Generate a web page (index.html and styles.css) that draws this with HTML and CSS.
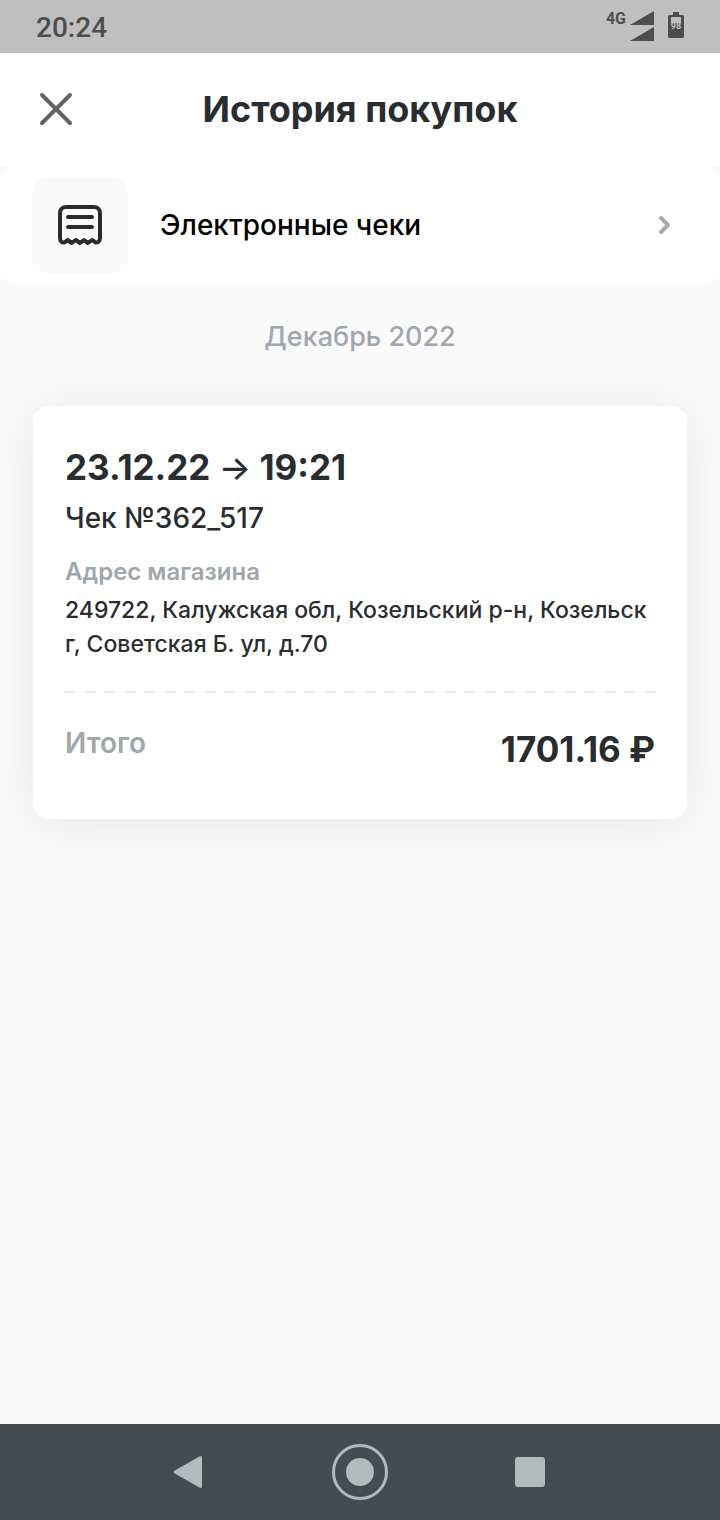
FILE: index.html
```html
<!DOCTYPE html>
<html lang="ru">
<head>
    <meta charset="UTF-8">
    <meta name="viewport" content="width=device-width, initial-scale=1.0">
    <title>История покупок</title>
    <link rel="stylesheet" href="styles.css">
</head>
<body>
    <div class="status-bar">
        <span class="status-time">20:24</span>
        <div class="status-icons">
            <span class="network">4G</span>
            <svg class="signal" viewBox="0 0 24 32" aria-hidden="true">
                <path d="M24 0v14H0z"/>
                <path d="M24 16v14H0z"/>
            </svg>
            <svg class="battery" viewBox="0 0 16 28" aria-hidden="true">
                <path d="M5 1h6v3h3.500a1.500 1.500 0 0 1 1.500 1.500v20a1.500 1.500 0 0 1-1.500 1.500h-13A1.500 1.500 0 0 1 0 25.500v-20A1.500 1.500 0 0 1 1.500 4H5z"/>
                <path class="battery-empty" d="M3 6h10v6H3z"/>
                <text class="battery-level" x="8" y="18">98</text>
            </svg>
        </div>
    </div>

    <header class="header">
        <button type="button" class="btn-close" aria-label="Закрыть">
            <svg viewBox="0 0 48 48">
                <path d="M10 10l28 28M38 10L10 38"/>
            </svg>
        </button>
        <h1>История покупок</h1>
    </header>

    <main class="content">
        <div class="receipts-wrap">
            <a href="#" class="receipts-link">
                <span class="receipts-icon">
                    <svg viewBox="0 0 48 48">
                        <path d="M4 37V12a6 6 0 0 1 6-6h28a6 6 0 0 1 6 6v25c0 3.500-2.500 5-4.500 4.500l-3-2.500-5 3-3.500-3-4 3-4.300-3-4 3-4.200-3-3 2.500C6 42 4 40.500 4 37z"/>
                        <path d="M12 16h24M12 26h24"/>
                    </svg>
                </span>
                <span class="receipts-title">Электронные чеки</span>
                <svg class="chevron" viewBox="0 0 24 24">
                    <path d="M9 5l7 7-7 7"/>
                </svg>
            </a>
        </div>

        <h2 class="month">Декабрь 2022</h2>

        <article class="card">
            <h3 class="card-date">23.12.22 <span class="arrow">→</span> 19:21</h3>
            <p class="card-number">Чек №362_517</p>
            <p class="card-label">Адрес магазина</p>
            <p class="card-address">249722, Калужская обл, Козельский р-н, Козельск г, Советская Б. ул, д.70</p>
            <div class="divider"></div>
            <div class="total">
                <span class="total-label">Итого</span>
                <span class="total-sum">1701.16 ₽</span>
            </div>
        </article>
    </main>

    <nav class="nav-bar">
        <button type="button" class="nav-btn" aria-label="Назад">
            <svg viewBox="0 0 56 56">
                <path d="M12.800 29.500a1.700 1.700 0 0 1 0-3L37.500 12.500Q40 11 40 14v28q0 3-2.500 1.500z"/>
            </svg>
        </button>
        <button type="button" class="nav-btn" aria-label="Домой">
            <svg viewBox="0 0 56 56">
                <circle class="ring" cx="28" cy="28" r="26.500"/>
                <circle cx="28" cy="28" r="14"/>
            </svg>
        </button>
        <button type="button" class="nav-btn" aria-label="Недавние">
            <svg viewBox="0 0 56 56">
                <rect x="13" y="13" width="30" height="30" rx="3"/>
            </svg>
        </button>
    </nav>
</body>
</html>
```

FILE: styles.css
```css
* {
    box-sizing: border-box;
}

body {
    display: flex;
    flex-direction: column;
    min-height: 100vh;
    margin: 0;
    background-color: #fafafa;
    color: #292d30;
    font-family: Inter, "Noto Sans", sans-serif;
}

h1, h2, h3, p {
    margin: 0;
}

button {
    padding: 0;
    border: none;
    background: none;
    cursor: pointer;
}

svg {
    display: block;
}

.status-bar {
    display: flex;
    justify-content: space-between;
    align-items: center;
    height: 53px;
    padding: 1px 36px 0;
    background-color: #bfbfbf;
    color: #4d4d4d;
    font-family: Roboto, sans-serif;
    font-weight: 500;
}

.status-time {
    font-size: 28px;
}

.status-icons {
    display: flex;
    align-items: flex-start;
}

.network {
    margin-right: 4px;
    font-size: 16px;
    line-height: 16px;
    font-weight: 700;
}

.signal {
    width: 24px;
    height: 32px;
    margin-right: 14px;
    fill: #4d4d4d;
}

.battery {
    width: 16px;
    height: 28px;
    fill: #4d4d4d;
}

.battery .battery-empty {
    fill: #bfbfbf;
}

.battery .battery-level {
    fill: #bfbfbf;
    font-size: 9px;
    font-weight: bold;
    text-anchor: middle;
}

.header {
    display: grid;
    grid-template-columns: 48px 1fr 48px;
    align-items: center;
    height: 114px;
    padding: 0 32px 2px;
    background-color: #fff;
}

.btn-close svg {
    width: 48px;
    height: 48px;
    fill: none;
    stroke: #5f6366;
    stroke-width: 4;
    stroke-linecap: round;
}

.header h1 {
    font-size: 36px;
    line-height: 50px;
    font-weight: 700;
    text-align: center;
}

.content {
    flex: 1;
}

.receipts-link {
    display: flex;
    align-items: center;
    padding: 10px 32px 12px;
    border-radius: 16px;
    background-color: #fff;
    color: #000;
    text-decoration: none;
}

.receipts-icon {
    padding: 24px;
    margin-right: 32px;
    border-radius: 16px;
    background-color: #fafafa;
}

.receipts-icon svg {
    width: 48px;
    height: 48px;
    fill: none;
    stroke: #292d30;
    stroke-width: 4;
    stroke-linecap: round;
    stroke-linejoin: round;
}

.receipts-title {
    flex: 1;
    font-size: 28px;
    line-height: 36px;
    font-weight: 500;
}

.chevron {
    width: 24px;
    height: 24px;
    margin-right: 12px;
    fill: none;
    stroke: #a5abae;
    stroke-width: 4;
    stroke-linecap: round;
    stroke-linejoin: round;
}

.month {
    padding: 34px 32px 51px;
    color: #a0a7b0;
    font-size: 27px;
    line-height: 36px;
    font-weight: 500;
    text-align: center;
}

.card {
    margin: 0 33px;
    padding: 36px 32px 46px;
    border-radius: 16px;
    background-color: #fff;
    box-shadow: 0 4px 56px rgba(0, 0, 0, 0.08);
}

.card-date {
    margin-bottom: 2px;
    font-size: 35px;
    line-height: 50px;
    font-weight: 700;
}

.card-date .arrow {
    font-size: 34px;
    line-height: 36px;
    font-weight: 500;
}

.card-number {
    margin-bottom: 14px;
    font-size: 28px;
    line-height: 48px;
    font-weight: 500;
}

.card-label {
    margin-bottom: 5px;
    color: #a0a7ac;
    font-size: 24px;
    line-height: 32px;
    font-weight: 600;
}

.card-address {
    font-size: 23px;
    line-height: 34px;
    font-weight: 500;
}

.divider {
    height: 2px;
    margin: 30px 0 32px;
    background: repeating-linear-gradient(to right, #e6e7e8 0 10px, transparent 10px 20px);
}

.total {
    display: flex;
    justify-content: space-between;
    align-items: flex-start;
}

.total-label {
    color: #a0a7ac;
    font-size: 28px;
    line-height: 36px;
    font-weight: 600;
}

.total-sum {
    font-size: 35px;
    line-height: 48px;
    font-weight: 700;
}

.nav-bar {
    display: flex;
    justify-content: center;
    align-items: center;
    gap: 114px;
    height: 96px;
    background-color: #454c51;
}

.nav-btn svg {
    width: 56px;
    height: 56px;
    fill: #b4b9bb;
}

.nav-btn .ring {
    fill: none;
    stroke: #b4b9bb;
    stroke-width: 3;
}
```
